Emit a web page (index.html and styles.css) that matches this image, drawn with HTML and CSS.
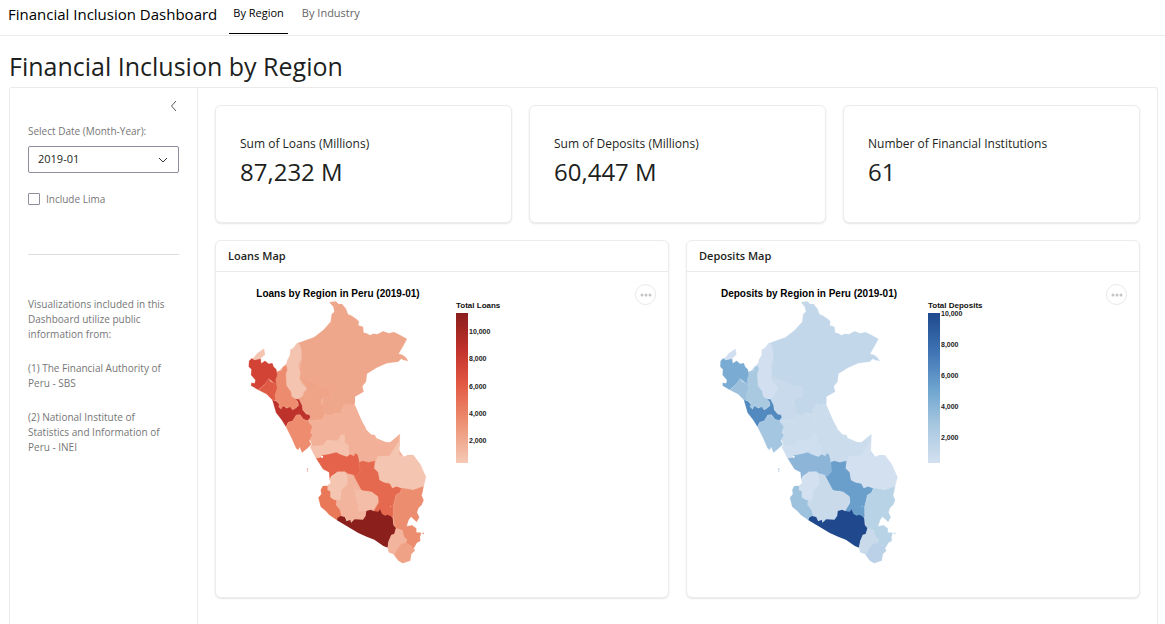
FILE: index.html
```html
<!DOCTYPE html>
<html lang="en">
<head>
<meta charset="utf-8">
<title>Financial Inclusion Dashboard</title>
<link rel="stylesheet" href="styles.css">
</head>
<body>
<header class="navbar">
  <span class="brand">Financial Inclusion Dashboard</span>
  <nav class="nav">
    <a class="nav-link active" href="#region">By Region</a>
    <a class="nav-link" href="#industry">By Industry</a>
  </nav>
</header>
<h1 class="page-title">Financial Inclusion by Region</h1>
<div class="layout">
  <aside class="sidebar">
    <button class="collapse" type="button" aria-label="Collapse sidebar">
      <svg width="12" height="12" viewBox="0 0 12 12"><path d="M9 1 4.500 6 9 11"/></svg>
    </button>
    <label class="field-label" for="date">Select Date (Month-Year):</label>
    <div class="select-wrap">
      <select id="date" class="select"><option>2019-01</option></select>
      <svg class="chevron" width="10" height="10" viewBox="0 0 10 10"><path d="M1 3 5 7 9 3"/></svg>
    </div>
    <label class="check"><input type="checkbox">Include Lima</label>
    <hr class="divider">
    <div class="notes">
      <p>Visualizations included in this Dashboard utilize public information from:</p>
      <p>(1) The Financial Authority of Peru - SBS</p>
      <p>(2) National Institute of Statistics and Information of Peru - INEI</p>
    </div>
  </aside>
  <main class="main">
    <section class="stats">
      <div class="card stat"><div class="stat-label">Sum of Loans (Millions)</div><div class="stat-value">87,232 M</div></div>
      <div class="card stat"><div class="stat-label">Sum of Deposits (Millions)</div><div class="stat-value">60,447 M</div></div>
      <div class="card stat"><div class="stat-label">Number of Financial Institutions</div><div class="stat-value">61</div></div>
    </section>
    <section class="maps">
      <article class="card">
        <h2 class="card-header">Loans Map</h2>
        <div class="card-body">
          <svg class="chart reds" width="300" height="290" viewBox="0 0 300 290">
            <defs>
              <linearGradient id="red-scale" x1="0" y1="0" x2="0" y2="1">
                <stop offset="0" stop-color="#8a1f1c"/><stop offset=".25" stop-color="#c2322c"/><stop offset=".47" stop-color="#e25842"/><stop offset=".7" stop-color="#ec8a6c"/><stop offset="1" stop-color="#f5c9b5"/>
              </linearGradient>
              <symbol id="peru" viewBox="0 0 600 870">
                <g class="regions">
                <path class="land" d="M110 280 150 240 178 230 300 300 345 375 375 445 400 470 470 500 540 600 500 640 480 700 492 740 500 790 470 820 440 760 380 740 300 700 266 620 285 585 300 560 240 535 220 500 212 475 150 430 100 350 60 320 60 260Z"/>
                <path class="land" d="M228 535 212 497 240 480 300 520Z"/>
                <path class="loreto" d="M268 67 287 64 296 72 306 72 318 86 324 103 335 107 352 119 357 125 355 136 369 140 371 158 380 160 390 166 400 161 412 163 429 154 447 160 462 156 480 165 501 177 490 197 476 221 488 225 497 232 505 243 490 240 484 236 475 245 440 250 410 263 381 281 378 305 367 319 371 335 345 350 345 370 336 376 318 410 272 425 240 425 250 350 180 300 178 280 185 240 174 189 222 172 250 150 272 125 275 103 283 95 280 80Z"/>
                <path class="sanmartin" d="M178 292 192 292 200 300 220 303 240 318 270 321 272 350 245 355 242 372 252 378 250 395 256 402 246 422 195 422 210 413 208 405 190 390 175 357 190 345 200 325Z"/>
                <path class="huanuco" d="M195 422 215 422 245 418 257 402 272 408 285 398 305 402 310 435 315 465 325 525 220 505 210 480 215 445Z"/>
                <path class="ucayali" d="M305 402 303 390 314 371 324 375 336 373 345 388 360 415 378 445 368 461 405 465 412 485 450 487 480 462 478 500 450 529 415 528 408 545 360 546 340 525 328 525 325 500 313 465 305 462Z"/>
                <path class="pasco" d="M246 424 255 430 258 450 272 460 290 450 310 424 308 445 314 462 285 487 250 500 222 496 212 475 218 445 210 422Z"/>
                <path class="pasco" d="M255 402 272 408 285 398 305 402 310 422 302 440 286 446 270 461 255 442 249 420Z"/>
                <path class="junin" d="M210 500 222 497 248 496 262 479 293 482 302 464 315 465 315 488 325 495 329 530 300 526 262 528 236 535 228 535Z"/>
                <path class="amazonas" d="M172 188 180 195 185 213 184 238 176 252 177 268 182 278 178 294 186 312 193 317 200 327 190 338 187 350 170 357 155 350 140 325 137 306 140 285 137 270 142 240 150 226 151 209 160 204Z"/>
                <path class="tumbes" d="M37 238 52 220 72 206 75 224 62 235 62 241Z"/>
                <path class="cajamarca" d="M106 275 125 272 129 260 140 257 142 270 137 282 140 318 152 334 156 350 168 358 176 373 168 384 157 389 148 381 137 383 130 376 122 388 116 380 118 370 104 358 106 330 104 310Z"/>
                <path class="piura" d="M35 235 44 240 62 236 64 250 75 242 86 251 97 249 101 260 109 268 112 285 107 300 110 315 88 297 75 312 55 330 33 317 34 308 44 310 46 300 33 285 34 268 26 260 27 243Z"/>
                <path class="lambayeque" d="M55 330 72 315 86 295 92 305 108 310 112 322 105 345 107 360 99 362 80 343Z"/>
                <path class="libertad" d="M97 360 108 362 118 373 116 380 123 388 129 377 140 385 150 380 158 390 169 383 176 376 174 365 166 357 177 358 186 376 188 390 199 403 208 404 211 412 203 422 190 418 180 404 169 405 158 423 145 427 138 441 125 420 108 398Z"/>
                <path class="ancash" d="M138 441 145 427 158 423 169 405 180 404 190 418 203 422 217 440 211 458 217 465 208 483 214 493 204 503 186 518 179 501 175 510 168 505 155 475Z"/>
                <path class="cusco" d="M353 548 368 542 385 547 405 542 403 565 415 577 419 600 432 607 450 611 457 624 469 619 487 623 480 638 468 645 460 680 460 712 448 714 430 709 400 694 415 670 413 652 385 635 362 632 352 610 336 585 353 580Z"/>
                <path class="huancavelica" d="M228 535 240 533 247 526 268 522 289 517 300 523 321 530 330 523 342 528 345 519 353 524 357 540 360 575 348 588 325 583 315 575 294 576 275 588 269 599 267 577 249 568Z"/>
                <path class="madre" d="M407 545 413 529 448 527 479 480 478 524 492 530 503 525 520 525 541 553 558 591 551 619 520 629 483 624 469 619 457 624 450 609 432 607 419 600 415 577 403 565Z"/>
                <path class="puno" d="M485 624 520 629 551 618 548 635 545 646 551 661 545 675 536 683 531 697 538 712 530 726 513 710 506 720 500 739 515 735 529 745 529 757 544 758 540 771 541 783 531 788 520 807 490 794 490 770 475 755 464 740 460 714 459 680 468 645 480 638Z"/>
                <path class="ica" d="M262 617 248 618 242 630 244 642 235 653 242 680 258 694 268 705 291 721 310 714 304 690 293 675 293 655 275 645 270 628Z"/>
                <path class="ayacucho" d="M318 580 340 585 352 608 365 632 385 633 412 648 415 665 400 692 378 697 375 716 350 723 330 728 313 713 305 711 300 690 288 675 290 655 302 655 304 635 322 615Z"/>
                <path class="apurimac" d="M262 630 264 615 272 610 269 597 278 588 292 575 315 575 323 590 322 614 305 630 301 662 282 659 271 652 271 634Z"/>
                <path class="abancay" d="M342 625 350 630 362 629 377 635 395 635 414 650 415 665 400 688 372 694 353 693 355 675 345 645Z"/>
                <path class="arequipa" d="M291 721 293 713 302 708 314 711 320 723 331 720 333 728 344 718 369 719 377 708 379 693 392 689 400 693 415 695 420 688 426 702 436 707 442 704 451 708 458 714 460 735 468 745 463 763 454 765 446 785 443 803 430 798 403 779 380 770 355 759Z"/>
                <path class="moquegua" d="M443 803 446 784 454 765 463 762 468 745 479 748 487 750 492 770 502 779 494 794 484 800 472 812 464 824 446 817Z"/>
                <path class="tacna" d="M462 825 472 807 485 790 500 789 520 803 525 812 514 822 511 842 488 850 475 842Z"/>
                <path class="cusco" d="M201 565h2v5h-2zM201 572h2v3h-2z"/>
                <path class="puno" d="M548 758h4v4h-4z"/>
                <path class="water" d="M243 528h6v5h-6zM451 679h2v2h-2zM508 733h4v4h-4z"/>
                </g>
              </symbol>
            </defs>
            <text class="chart-title" x="98" y="17" text-anchor="middle">Loans by Region in Peru (2019-01)</text>
            <use href="#peru" width="200" height="290"/>
            <text class="legend-title" x="216" y="28">Total Loans</text>
            <rect x="216" y="33" width="12" height="150" fill="url(#red-scale)"/>
            <g class="legend-labels"><text x="229" y="54">10,000</text><text x="229" y="81">8,000</text><text x="229" y="109">6,000</text><text x="229" y="136">4,000</text><text x="229" y="163">2,000</text></g>
          </svg>
          <button class="more" type="button" aria-label="Chart actions"><svg width="12" height="4" viewBox="0 0 12 4"><circle cx="2" cy="2" r="1.500"/><circle cx="6" cy="2" r="1.500"/><circle cx="10" cy="2" r="1.500"/></svg></button>
        </div>
      </article>
      <article class="card">
        <h2 class="card-header">Deposits Map</h2>
        <div class="card-body">
          <svg class="chart blues" width="300" height="290" viewBox="0 0 300 290">
            <defs>
              <linearGradient id="blue-scale" x1="0" y1="0" x2="0" y2="1">
                <stop offset="0" stop-color="#1f498c"/><stop offset=".25" stop-color="#3d72b3"/><stop offset=".52" stop-color="#70a6d0"/><stop offset=".75" stop-color="#a8c8e0"/><stop offset="1" stop-color="#d3e0f0"/>
              </linearGradient>
            </defs>
            <text class="chart-title" x="98" y="17" text-anchor="middle">Deposits by Region in Peru (2019-01)</text>
            <use href="#peru" width="201" height="290"/>
            <text class="legend-title" x="217" y="28">Total Deposits</text>
            <rect x="217" y="33" width="12" height="150" fill="url(#blue-scale)"/>
            <g class="legend-labels"><text x="230" y="36">10,000</text><text x="230" y="67">8,000</text><text x="230" y="98">6,000</text><text x="230" y="129">4,000</text><text x="230" y="160">2,000</text></g>
          </svg>
          <button class="more" type="button" aria-label="Chart actions"><svg width="12" height="4" viewBox="0 0 12 4"><circle cx="2" cy="2" r="1.500"/><circle cx="6" cy="2" r="1.500"/><circle cx="10" cy="2" r="1.500"/></svg></button>
        </div>
      </article>
    </section>
  </main>
</div>
</body>
</html>
```
FILE: styles.css
```css
* { box-sizing: border-box; }
html { height: 100%; }
body {
  margin: 0;
  min-height: 100%;
  display: flex;
  flex-direction: column;
  font-family: "Open Sans", sans-serif;
  font-size: 12px;
  color: #1d1f21;
  background: #fff;
}
.navbar {
  display: flex;
  align-items: flex-start;
  height: 36px;
  padding-left: 8px;
  border-bottom: 1px solid #ebebeb;
}
.brand { font-size: 15px; line-height: 28px; color: #000; }
.nav { display: flex; gap: 10px; margin-left: 12px; }
.nav-link {
  height: 34px;
  padding: 0 4px;
  font-size: 11px;
  line-height: 26px;
  color: #666;
  text-decoration: none;
}
.nav-link.active { color: #000; border-bottom: 1px solid #000; }
.page-title {
  margin: 14px 9px 5px;
  font-size: 25px;
  line-height: 32px;
  font-weight: 400;
}
.layout {
  flex: 1;
  display: flex;
  margin: 0 7px 0 9px;
  border: 1px solid #ebebeb;
  border-bottom: 0;
  border-radius: 3px 3px 0 0;
}
.sidebar {
  display: flex;
  flex-direction: column;
  flex: 0 0 188px;
  padding: 12px 18px;
  border-right: 1px solid #ebebeb;
  font-size: 10px;
  color: #767676;
}
.collapse {
  display: flex;
  align-self: flex-end;
  padding: 0;
  border: 0;
  background: none;
}
.collapse svg, .chevron { fill: none; stroke: #555; stroke-width: 1; }
.field-label { margin-top: 11px; line-height: 16px; }
.select-wrap { position: relative; margin-top: 7px; }
.select {
  appearance: none;
  display: block;
  width: 100%;
  height: 27px;
  padding: 0 9px 2px;
  border: 1px solid #8d8d9b;
  border-radius: 2px;
  background: #fff;
  font: 11px "Open Sans", sans-serif;
  color: #1d1f21;
}
.chevron { position: absolute; right: 11px; top: 9px; pointer-events: none; stroke: #333; }
.check { display: flex; align-items: center; gap: 6px; margin-top: 18px; line-height: 16px; }
.check input {
  appearance: none;
  width: 12px;
  height: 12px;
  margin: 0;
  border: 1px solid #8d8d9b;
  border-radius: 1px;
}
.divider { width: 100%; margin: 47px 0 42px; border: 0; border-top: 1px solid #dedede; }
.notes { padding-right: 8px; line-height: 15px; }
.notes p { margin: 0 0 19px; }
.main { flex: 1; min-width: 0; padding: 17px 17px 26px; }
.card {
  border: 1px solid #ececec;
  border-radius: 6px;
  background: #fff;
  box-shadow: 0 1px 2px rgba(0, 0, 0, .1);
}
.stats { display: grid; grid-template-columns: repeat(3, 1fr); gap: 17px; }
.stat { padding: 29px 24px 34px; }
.stat-label { line-height: 18px; }
.stat-value { margin-top: 3px; font-size: 24px; line-height: 32px; }
.maps { display: grid; grid-template-columns: repeat(2, 1fr); gap: 17px; margin-top: 17px; }
.card-header {
  margin: 0;
  padding: 0 12px;
  border-bottom: 1px solid #ebebeb;
  font-size: 11px;
  line-height: 30px;
  font-weight: 600;
}
.card-body {
  display: flex;
  justify-content: space-between;
  align-items: flex-start;
  padding: 8px 12px 27px 24px;
}
.chart { font-family: "Liberation Sans", Arial, sans-serif; font-weight: 700; }
.chart-title { font-size: 10px; fill: #000; }
.legend-title { font-size: 8px; fill: #111; }
.legend-labels { font-size: 7px; fill: #222; }
.more {
  display: flex;
  align-items: center;
  justify-content: center;
  width: 21px;
  height: 21px;
  margin-top: 4px;
  padding: 0;
  border: 1px solid #e8e8e8;
  border-radius: 50%;
  background: #fff;
}
.more svg { fill: #c4c4c4; }

.regions { stroke: var(--line); stroke-width: 1; }
.land { fill: var(--center); stroke: none; }
.loreto { fill: var(--loreto); }
.sanmartin { fill: var(--sanmartin); }
.huanuco, .ucayali, .pasco { fill: var(--center); }
.junin { fill: var(--junin); }
.amazonas, .tumbes { fill: var(--north); }
.piura { fill: var(--piura); }
.lambayeque { fill: var(--lambayeque); }
.cajamarca { fill: var(--cajamarca); }
.libertad { fill: var(--libertad); }
.ancash { fill: var(--ancash); }
.huancavelica { fill: var(--huancavelica); }
.cusco { fill: var(--cusco); }
.madre, .apurimac { fill: var(--madre); }
.puno { fill: var(--puno); }
.ica { fill: var(--ica); }
.ayacucho, .moquegua { fill: var(--ayacucho); }
.abancay { fill: var(--abancay); }
.arequipa { fill: var(--arequipa); stroke: none; }
.tacna { fill: var(--tacna); }
.water { fill: #fff; stroke: none; }
.reds {
  --line: rgba(246, 190, 165, .5);
  --loreto: #efa78b; --sanmartin: #f0a487; --center: #f2b098; --junin: #f4c2ad;
  --north: #f4c4b1; --piura: #d24336; --lambayeque: #df5b45; --cajamarca: #ec8b6e;
  --libertad: #be322c; --ancash: #ed8c6f; --huancavelica: #e4634a; --cusco: #e5694f;
  --madre: #f4c5b1; --puno: #ec8d70; --ica: #e87858; --ayacucho: #f2b49d;
  --abancay: #f3bda7; --arequipa: #8a1f1c; --tacna: #f0a287;
}
.blues {
  --line: rgba(220, 232, 245, .5);
  --loreto: #c3d7ea; --sanmartin: #c8daeb; --center: #cbdcec; --junin: #d0dfef;
  --north: #d2dff0; --piura: #7aabd2; --lambayeque: #9dc1dd; --cajamarca: #a9c9e1;
  --libertad: #528abf; --ancash: #a5c6e0; --huancavelica: #8cb5d8; --cusco: #6b9fcb;
  --madre: #d3e0f0; --puno: #b9d3e6; --ica: #9dc2dd; --ayacucho: #c9daeb;
  --abancay: #cadaeb; --arequipa: #1f498c; --tacna: #bbd1e8;
}
```
